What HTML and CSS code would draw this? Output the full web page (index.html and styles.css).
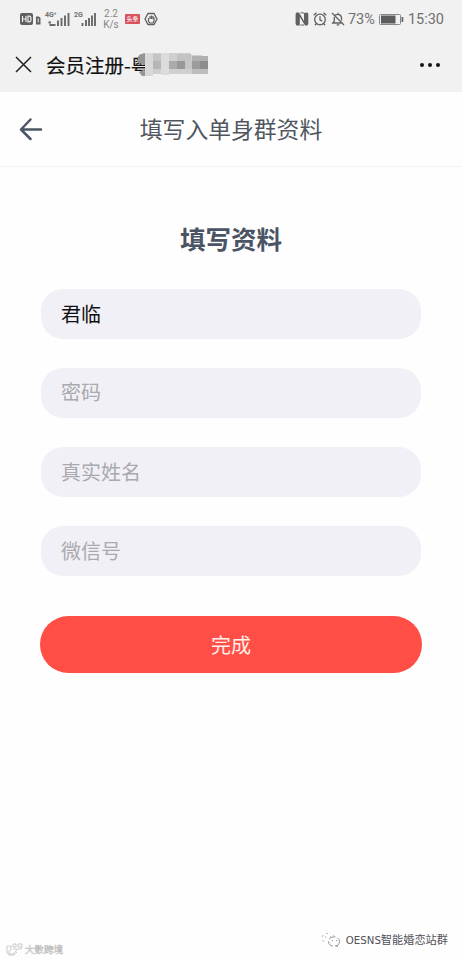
FILE: index.html
```html
<!DOCTYPE html>
<html lang="zh-CN">
<head>
<meta charset="utf-8">
<meta name="viewport" content="width=device-width, initial-scale=1">
<title>会员注册</title>
<link rel="stylesheet" href="styles.css">
</head>
<body>
<div class="screen">
  <div class="statusbar">
    <div class="status-left">
      <svg class="hd" width="22" height="14" viewBox="0 0 22 14">
        <rect x="0" y="1" width="13" height="12" rx="2" fill="#606060"/>
        <path d="M2.500 4v6M6 4v6M2.500 7H6M8 4.200h1.300Q11 4.200 11 7T9.300 9.800H8Z" fill="none" stroke="#eee" stroke-width="1.200"/>
        <path d="M16 4.500h2.800l1.700 1.500v6.500H16Z" fill="#606060"/>
        <path d="M18.200 6.500v4" stroke="#eee"/>
      </svg>
      <div class="signal signal-4g">
        <span class="gen">4G⁺</span>
        <svg width="25" height="16" viewBox="0 0 25 16"><path d="M3.500 11.500h2.500M4.500 14h4M9.500 13v2M13 9.500v5.500M16.500 7v8M20 4.500V15M23.500 2v13" stroke="#686868" stroke-width="1.900" fill="none"/></svg>
      </div>
      <div class="signal signal-2g">
        <span class="gen">2G</span>
        <svg width="22" height="16" viewBox="0 0 22 16"><path d="M8.500 12v3M12 9v6M15 7v8M18 4.500V15M21 2v13" stroke="#686868" stroke-width="1.900" fill="none"/></svg>
      </div>
      <div class="speed"><span>2.2</span><span>K/s</span></div>
      <span class="news">头条</span>
      <svg class="hand" width="14" height="14" viewBox="0 0 14 14" fill="none" stroke="#606060">
        <path d="M4 1.500h6L13 7l-3 5.500H4L1 7Z" stroke-width="1.300"/>
        <path d="M4.500 6v3.500l1.500 1.500h3l1-2V5.500M6 7V4M7.500 7V3.500M9 7V4" stroke-width="1.200"/>
      </svg>
    </div>
    <div class="status-right">
      <svg width="14" height="14" viewBox="0 0 14 14"><path d="M1.500.5H4l5 8.500V1l3.500-.5.800 1.500v10l-1 1.500H10L4.800 5v8.500H1.500L.6 12V2Z" fill="#606060"/><path d="M5.500.8 9 1M5.500 13H9" stroke="#606060"/></svg>
      <svg class="alarm" width="14" height="14" viewBox="0 0 14 14" fill="none" stroke="#606060" stroke-width="1.300"><circle cx="7" cy="7.500" r="5.300"/><path d="M7 4.300v3.500l2.200 1.300M.7 3.300 3.500.8M13.300 3.300 10.500.8M3.300 11.700 2 13.200M10.700 11.700l1.300 1.500"/></svg>
      <svg class="bell" width="14" height="14" viewBox="0 0 14 14" fill="none" stroke="#606060" stroke-width="1.300"><path d="M4.300 3.200C6 1.500 10.500 2.300 10.500 6v2.500M3.300 5v4L1.800 11h8.500M7 .7v1.500M5.700 12.800h2.600M1 1l12 12"/></svg>
      <span class="percent">73%</span>
      <svg class="battery" width="25" height="11" viewBox="0 0 25 11"><rect x=".5" y=".5" width="21" height="10" rx="1" fill="none" stroke="#888"/><rect x="2" y="1.500" width="14.500" height="8" fill="#5c5c5c"/><rect x="22.500" y="3" width="1.800" height="5" fill="#666"/></svg>
      <span class="clock">15:30</span>
    </div>
  </div>

  <div class="webbar">
    <svg class="close" width="17" height="17" viewBox="0 0 17 17"><path d="M1 1l15 15M16 1 1 16" stroke="#222" stroke-width="1.500"/></svg>
    <div class="webtitle">会员注册-粤
      <svg class="mosaic" width="72" height="24" viewBox="0 0 72 24">
        <path d="M2 2Q6 0 9 0V23H5L2 19 8 16 8 12 0 9Z" fill="#959595"/>
        <path d="M8 0h46v2h11v1h6v18H8Z" fill="#cfcfcf"/>
        <path d="M8 0h8v23H8Z" fill="#d9d9d9"/>
        <path d="M16 1h8v7h-8Z" fill="#c5c5c5"/><path d="M16 8h8v8h-8Z" fill="#b6b6b6"/>
        <path d="M24 0h8v22h-8Z" fill="#dcdcdc"/>
        <path d="M32 8h8v8h-8Z" fill="#ababab"/><path d="M40 8h8v8h-8Z" fill="#989898"/>
        <path d="M40 1h14v7H40Z" fill="#c3c3c3"/><path d="M48 8h7v8h-7Z" fill="#c6c6c6"/>
        <path d="M55 3h16v5H55Z" fill="#b1b1b1"/><path d="M55 8h8v8h-8Z" fill="#9c9c9c"/><path d="M63 8h8v8h-8Z" fill="#8d8d8d"/>
        <path d="M55 16h16v5H55Z" fill="#bdbdbd"/>
      </svg>
    </div>
    <svg class="more" width="22" height="6" viewBox="0 0 22 6" fill="#151515"><circle cx="3" cy="3" r="2"/><circle cx="11" cy="3" r="2"/><circle cx="19" cy="3" r="2"/></svg>
  </div>

  <header class="header">
    <svg class="back" width="24" height="24" viewBox="0 0 24 24" fill="none" stroke="#4c5564" stroke-width="2.500" stroke-linecap="round" stroke-linejoin="round"><path d="M22 12.500H2M11.500 2.500 2 12.500l9.500 9.500"/></svg>
    <span class="header-title">填写入单身群资料</span>
  </header>

  <main class="content">
    <h1>填写资料</h1>
    <form class="form">
      <div class="field filled">君临</div>
      <div class="field field-password">密码</div>
      <div class="field">真实姓名</div>
      <div class="field">微信号</div>
      <button class="submit" type="button">完成</button>
    </form>
  </main>

  <footer class="marks">
    <div class="mark-left">
      <svg width="17" height="13" viewBox="0 0 17 13" fill="none" stroke="#c4c4c4" stroke-width=".9"><path d="M1 3h4v4l-2 1v3h4l4-4M1 3v7l2 2h5l3-3M7 1h3v3H7zM12 1h4v3h-4zM7 6h8l1-2"/></svg>
      <span>大数跨境</span>
    </div>
    <div class="mark-right">
      <svg width="20" height="16" viewBox="0 0 20 16" fill="none" stroke="#8a8a8a" stroke-width=".9"><path d="M3 10 1.500 8M1 5l1-2M5 1.500h2M12 3l1 1" stroke="#b5b5b5"/><ellipse cx="13" cy="9.500" rx="5.500" ry="4.700" stroke-dasharray="7 2"/><path d="M4 5h1M9 5h1M11 8.500h1M15 8.500h1M15 13.500l2 1.500"/></svg>
      <span class="account"><span class="latin">OESNS</span>智能婚恋站群</span>
    </div>
  </footer>
</div>
</body>
</html>
```
FILE: styles.css
```css
* { box-sizing: border-box; }
body {
  margin: 0;
  background: #fefefe;
  font-family: "Noto Sans CJK SC", sans-serif;
}
svg { display: block; flex: none; }
.screen {
  width: 462px;
  height: 960px;
  display: flex;
  flex-direction: column;
  overflow: hidden;
}
.statusbar {
  height: 38px;
  flex: none;
  display: flex;
  justify-content: space-between;
  padding: 0 18px 0 20px;
  background: #f1f1f1;
  color: #707070;
  font-family: Roboto, sans-serif;
}
.status-left, .status-right { display: flex; align-items: center; }
.status-left { padding-bottom: 1px; }
.signal { display: flex; align-items: flex-start; position: relative; }
.signal-4g { margin-left: 3px; }
.signal-2g { margin-left: 4px; }
.gen {
  position: absolute;
  left: 0;
  top: 0;
  font-size: 7px;
  line-height: 8px;
  font-weight: 700;
}
.speed {
  display: flex;
  flex-direction: column;
  align-items: center;
  width: 16px;
  margin-left: 7px;
  font-size: 10px;
  line-height: 11px;
  color: #858585;
}
.news {
  width: 15px;
  height: 10px;
  margin-left: 6px;
  border-radius: 1px;
  background: #d9515d;
  color: #f6dfe1;
  font: 700 6px/9px "Noto Sans CJK SC", sans-serif;
  text-align: center;
}
.hand { margin-left: 4px; }
.alarm { margin-left: 4px; }
.bell { margin-left: 4px; }
.percent { margin-left: 3px; font-size: 14.5px; }
.battery { margin-left: 4px; }
.clock { margin-left: 4px; font-size: 14.5px; }

.webbar {
  height: 54px;
  flex: none;
  display: flex;
  align-items: center;
  padding: 0 21px 0 15px;
  background: #f1f1f1;
}
.close { margin-top: -1px; }
.webtitle {
  position: relative;
  margin-left: 14px;
  font-size: 19.5px;
  line-height: 28px;
  font-weight: 400;
  color: #111;
  -webkit-text-stroke: .2px #111;
  white-space: nowrap;
}
.mosaic { position: absolute; left: 91px; top: 2px; }
.more { margin-left: auto; }

.header {
  height: 75px;
  flex: none;
  display: grid;
  grid-template-columns: 24px 1fr 24px;
  align-items: center;
  padding: 0 19px;
  border-bottom: 1px solid #f3f3f5;
}
.header-title {
  text-align: center;
  font-size: 22.8px;
  line-height: 34px;
  color: #50565f;
}
.content { padding: 52px 40px 0; }
h1 {
  margin: 0 0 33px;
  font-size: 25.5px;
  line-height: 37px;
  font-weight: 700;
  text-align: center;
  color: #4a5464;
}
.form { display: flex; flex-direction: column; gap: 29px; }
.field {
  height: 50px;
  margin: 0 1px;
  padding: 0 20px;
  border-radius: 22px;
  background: #f1f0f6;
  font-size: 20px;
  line-height: 50px;
  color: #aaaaae;
}
.field-password { line-height: 48px; }
.filled { color: #111; }
.submit {
  height: 57px;
  margin-top: 11px;
  padding: 0;
  border: 0;
  border-radius: 29px;
  background: #ff4e45;
  color: #fff0ec;
  font: 20px/54px "Noto Sans CJK SC", sans-serif;
}
.marks {
  margin-top: auto;
  height: 34px;
  display: flex;
  justify-content: space-between;
  padding: 0 14px 0 6px;
}
.mark-left, .mark-right { display: flex; align-items: center; }
.mark-left {
  height: 14px;
  margin-top: 16px;
  gap: 2px;
  font-size: 9.5px;
  line-height: 14px;
  color: #fff;
  -webkit-text-stroke: .5px #bcbcbc;
}
.mark-right {
  height: 28px;
  gap: 5px;
  color: #505058;
}
.account { font-size: 11.2px; line-height: 18px; }
.latin { font-family: "DejaVu Sans", sans-serif; font-size: 10.2px; }
```
